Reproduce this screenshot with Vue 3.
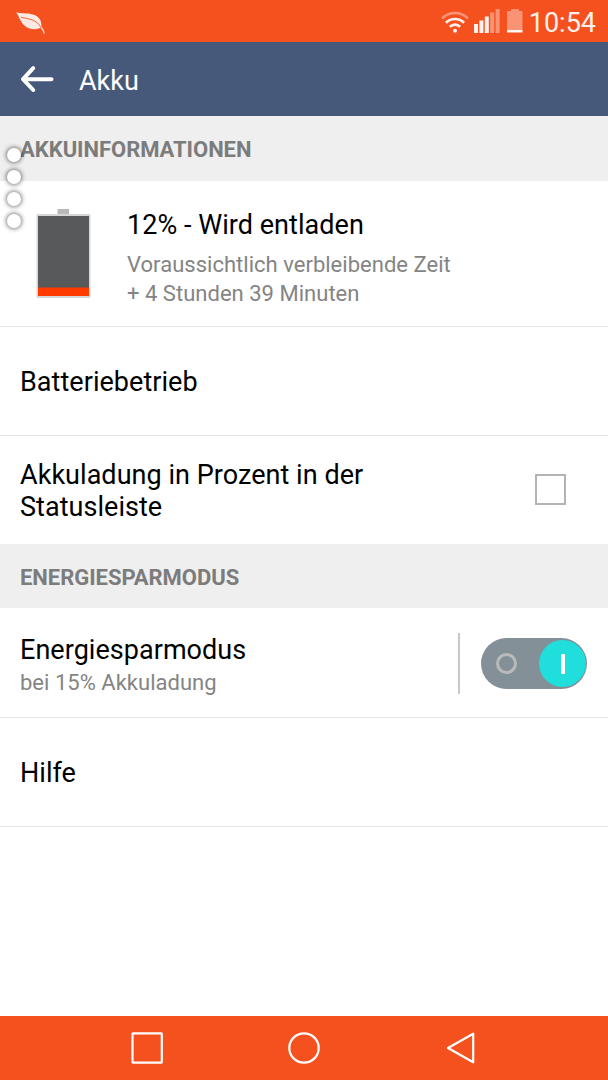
<template>
  <div class="screen">
    <header class="status-bar">
      <svg class="leaf" width="32" height="24" viewBox="0 0 32 24">
        <path d="M.1 .3C5 2 11 .7 17 2.500c6 1.900 8.500 5.500 8.500 12 1.500 2.200 2.800 4.300 3.300 7l-1 .3c-.7-2.400-1.700-4.200-3.100-6C20 18.200 13.500 17.500 9 14 4.300 10.200 3.500 5 .1 .3z" fill="#fdeae4" />
        <path d="M5 5.200c8 2 15.500 2 20 10.300" fill="none" stroke="#f5511e" stroke-width=".9" />
      </svg>
      <div class="status-icons">
        <svg class="wifi" width="28" height="23" viewBox="0 0 28 23" fill="none" stroke="#fff" stroke-width="2.600">
          <path d="M1 7.500C8.500 .2 19.500 .2 27 7.500" opacity=".4" />
          <path d="M4.900 11.700c5.200-5 13-5 18.200 0" opacity=".92" />
          <path d="M8.800 15.800c3-2.900 7.400-2.900 10.400 0" opacity=".92" />
          <circle cx="14" cy="19.700" r="2" fill="#fff" stroke="none" opacity=".92" />
        </svg>
        <svg class="signal" width="26" height="24" viewBox="0 0 26 24" fill="#fff">
          <rect
            v-for="(bar, i) in signalBars"
            :key="i"
            :x="bar.x"
            :y="24 - bar.height"
            width="4"
            :height="bar.height"
            :opacity="bar.on ? 0.92 : 0.38"
          />
        </svg>
        <svg class="battery-small" width="16" height="24" viewBox="0 0 16 24" fill="#fff">
          <path d="M4 0h8v2h3.500v19H0V2h4z" opacity=".38" />
          <rect y="21" width="15.500" height="2.500" opacity=".95" />
        </svg>
        <span class="clock">10:54</span>
      </div>
    </header>

    <div class="app-bar">
      <svg class="back" width="34" height="28" viewBox="0 0 34 28" fill="none" stroke="#fff" stroke-width="4" stroke-linecap="round" stroke-linejoin="round">
        <path d="M13.200 3.200L3 14.200l10.200 10.800M3.500 14.200h28" />
      </svg>
      <h1>Akku</h1>
    </div>

    <main>
      <h2 class="section first">AKKUINFORMATIONEN</h2>

      <div class="row info">
        <svg class="battery" width="56" height="90" viewBox="0 0 56 90">
          <rect x="21.500" y="0" width="11.500" height="5" fill="#b7b8b9" />
          <rect x="0.500" y="5" width="54" height="84" rx="1.500" fill="#d5d6d7" />
          <rect x="2" y="7" width="51" height="72" fill="#58595b" />
          <rect x="2" y="78.500" width="51" height="8.500" fill="#ff3b00" />
        </svg>
        <div class="info-text">
          <div class="title">12% - Wird entladen</div>
          <div class="sub">Voraussichtlich verbleibende Zeit<br>+ 4 Stunden 39 Minuten</div>
        </div>
      </div>

      <div class="row">
        <div class="title">Batteriebetrieb</div>
      </div>

      <div class="row no-line" @click="showPercent = !showPercent">
        <div class="title wrap">Akkuladung in Prozent in der Statusleiste</div>
        <span class="checkbox" :class="{ checked: showPercent }"></span>
      </div>

      <h2 class="section">ENERGIESPARMODUS</h2>

      <div class="row saver">
        <div class="saver-text">
          <div class="title">Energiesparmodus</div>
          <div class="sub">bei 15% Akkuladung</div>
        </div>
        <span class="divider"></span>
        <button class="toggle" :class="{ off: !powerSaver }" @click="powerSaver = !powerSaver">
          <span class="ring"></span>
          <span class="knob"></span>
        </button>
      </div>

      <div class="row">
        <div class="title">Hilfe</div>
      </div>
    </main>

    <nav class="nav-bar">
      <svg width="32" height="32" viewBox="0 0 32 32"><rect x="1.500" y="1.300" width="29.300" height="29.300" rx=".5" /></svg>
      <svg width="32" height="32" viewBox="0 0 32 32"><circle cx="16" cy="16" r="14.700" /></svg>
      <svg width="32" height="32" viewBox="0 0 32 32"><path d="M28.200 1.700v28.600L3 16z" /></svg>
    </nav>

    <!-- Floating handle over the list -->
    <div class="handle">
      <span v-for="n in 4" :key="n"></span>
    </div>
  </div>
</template>

<script setup>
import { ref } from 'vue';

const showPercent = ref(false);
const powerSaver = ref(true);

const signalBars = [
  { x: 0, height: 9, on: true },
  { x: 5.4, height: 12.5, on: true },
  { x: 10.8, height: 16.5, on: true },
  { x: 16.2, height: 20.5, on: false },
  { x: 21.6, height: 24, on: false }
];
</script>

<style>
body {
  margin: 0;
}
</style>

<style scoped>
.screen {
  position: relative;
  display: flex;
  flex-direction: column;
  width: 608px;
  height: 1080px;
  overflow: hidden;
  background: #fff;
  color: #000;
  font-family: Roboto, "Liberation Sans", sans-serif;
}
.status-bar {
  display: flex;
  justify-content: space-between;
  height: 42px;
  padding: 0 12px 0 16px;
  background: #f5511e;
}
.leaf {
  margin-top: 12px;
}
.status-icons {
  display: flex;
  align-items: flex-start;
}
.wifi {
  margin-top: 11px;
}
.signal {
  margin: 9px 0 0 5px;
}
.battery-small {
  margin: 9px 0 0 7px;
}
.clock {
  margin-left: 6px;
  color: #fff0eb;
  font-size: 27px;
  line-height: 46px;
}
.app-bar {
  display: flex;
  align-items: center;
  height: 74px;
  padding-left: 20px;
  background: #46597a;
}
.app-bar h1 {
  margin: 3px 0 0 25px;
  color: #fff;
  font-size: 27px;
  font-weight: 400;
}
main {
  flex: 1;
}
.section {
  box-sizing: border-box;
  height: 64px;
  margin: 0;
  padding-left: 20px;
  background: #efefef;
  color: #7c7c7c;
  font-size: 22px;
  font-weight: 700;
  letter-spacing: -0.04px;
  line-height: 68px;
}
.section.first {
  height: 65px;
}
.row {
  box-sizing: border-box;
  display: flex;
  align-items: center;
  height: 109px;
  padding: 0 20px;
  border-bottom: 1px solid #e4e4e4;
}
.row.no-line {
  height: 108px;
  border-bottom: 0;
}
.row.saver {
  height: 110px;
}
.row.info {
  height: 146px;
}
.battery {
  margin: 0 35px 0 16px;
}
.info-text {
  padding-top: 8px;
}
.title {
  padding-top: 2px;
  font-size: 27px;
  line-height: 32px;
  letter-spacing: 0.04px;
}
.wrap {
  width: 360px;
  padding-top: 1px;
}
.sub {
  color: #848484;
  font-size: 22px;
  line-height: 29.5px;
  letter-spacing: 0.02px;
}
.info .sub {
  margin-top: 9px;
}
.saver-text {
  padding-top: 5px;
}
.saver .sub {
  margin-top: 2px;
}
.checkbox {
  box-sizing: border-box;
  width: 31px;
  height: 31px;
  margin: 0 22px 2px auto;
  border: 2.500px solid #b3b3b3;
}
.checkbox.checked {
  background: #1fdedb;
}
.divider {
  width: 2px;
  height: 61px;
  margin: 2px 0 0 auto;
  background: #c8c8c8;
}
.toggle {
  box-sizing: border-box;
  display: flex;
  align-items: center;
  justify-content: space-between;
  width: 106px;
  height: 51px;
  margin: 2px 1px 0 21px;
  padding: 0 1px 0 15px;
  border: 0;
  border-radius: 26px;
  background: #849097;
}
.toggle.off {
  flex-direction: row-reverse;
  padding: 0 15px 0 1px;
}
.ring {
  box-sizing: border-box;
  width: 21px;
  height: 21px;
  border: 3.500px solid #b9babc;
  border-radius: 50%;
}
.knob {
  display: flex;
  align-items: center;
  justify-content: center;
  width: 47px;
  height: 47px;
  border-radius: 50%;
  background: #1fdedb;
}
.knob::after {
  width: 4px;
  height: 20px;
  background: #fff;
  content: "";
}
.nav-bar {
  display: flex;
  align-items: center;
  justify-content: center;
  gap: 125px;
  height: 64px;
  background: #f5511e;
}
.nav-bar svg {
  fill: none;
  stroke: #fff;
  stroke-width: 2.200;
  stroke-linejoin: round;
}
.handle {
  position: absolute;
  top: 148px;
  left: 7px;
  display: flex;
  flex-direction: column;
  gap: 8px;
}
.handle span {
  width: 14px;
  height: 14px;
  border-radius: 50%;
  background: #fff;
  box-shadow: 0 0 4px 1px rgba(0, 0, 0, 0.5);
}
</style>
